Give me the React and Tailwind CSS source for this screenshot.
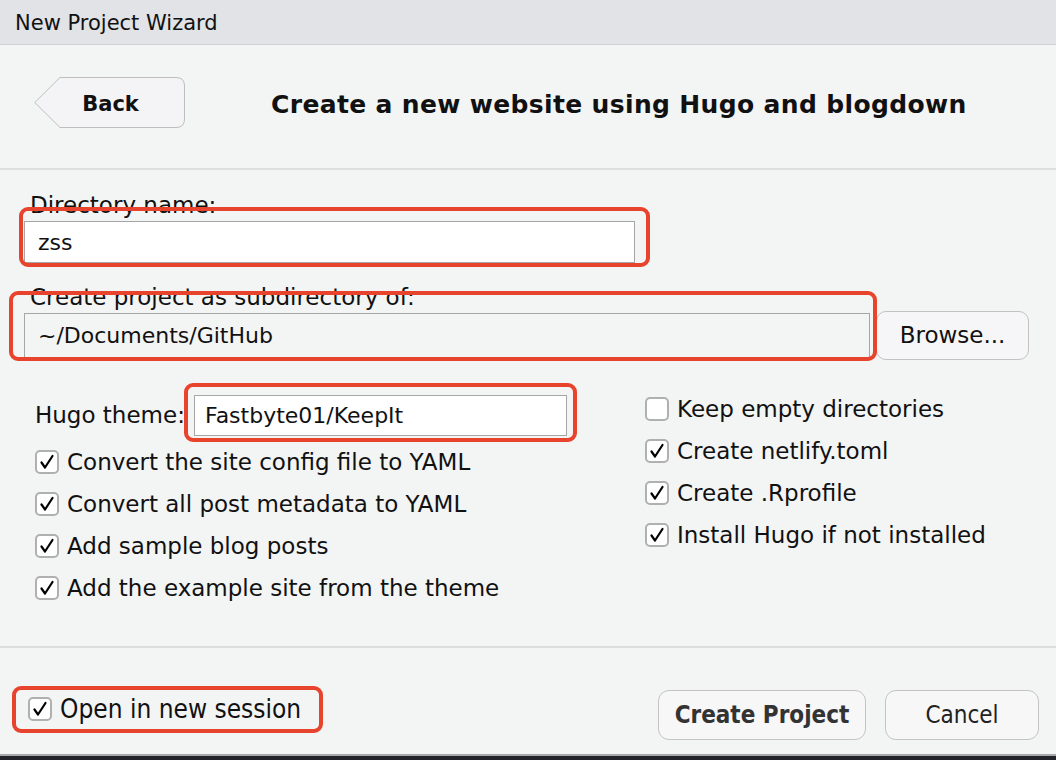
import React from "react";

const FONT = { fontFamily: '"DejaVu Sans", "Noto Sans", sans-serif' };
const COND = { fontFamily: '"DejaVu Sans Condensed", "DejaVu Sans", sans-serif', fontStretch: "condensed" };

function Check() {
  return (
    <svg width="16" height="16" viewBox="0 0 16 16" className="block">
      <path d="M2.5 8.5 L6 13.5 L13.5 2" fill="none" stroke="#000" strokeWidth="2.2" strokeLinecap="round" strokeLinejoin="round" />
    </svg>
  );
}

function Box({ checked }) {
  return (
    <div className="w-[24px] h-[24px] rounded-[5px] border-2 border-[#b0b0b0] bg-white flex items-center justify-center shrink-0">
      {checked ? <Check /> : null}
    </div>
  );
}

function CheckRow({ checked, label }) {
  return (
    <div className="h-[42px] flex items-center gap-[8px]">
      <Box checked={checked} />
      <span className="text-[23px] text-[#111] leading-none">{label}</span>
    </div>
  );
}

function RedBox({ className }) {
  return <div className={"absolute border-[4px] border-[#e8442d] rounded-[9px] pointer-events-none " + className} />;
}

export default function App() {
  return (
    <div className="w-[1056px] h-[760px] bg-[#f3f4f4] flex flex-col overflow-hidden text-[#111]" style={FONT}>
      {/* title bar */}
      <div className="h-[45px] shrink-0 bg-[#e2e3e7] border-b border-[#d2d3d7] flex items-center pl-[15px] pt-[3px] text-[21px]">
        New Project Wizard
      </div>

      {/* header */}
      <div className="h-[125px] shrink-0 border-b-2 border-[#dedede] flex items-start pt-[32px] pl-[34px]">
        <div className="relative w-[151px] h-[51px] shrink-0 flex items-center justify-center pl-[2px] pt-[4px]">
          <svg className="absolute inset-0" width="151" height="51" viewBox="0 0 151 51">
            <path d="M26 0.5 H142 Q150.5 0.5 150.5 9 V42 Q150.5 50.5 142 50.5 H26 L0.8 25.5 Z" fill="#f4f4f6" stroke="#bdbdbd" strokeWidth="1" />
          </svg>
          <span className="relative font-bold text-[21px]">Back</span>
        </div>
        <div className="ml-[86px] mt-[9px] font-bold text-[25px] tracking-[0.35px]">
          Create a new website using Hugo and blogdown
        </div>
      </div>

      {/* body */}
      <div className="h-[476px] shrink-0 flex flex-col pl-[24px]">
        <div className="mt-[21px] pl-[6px] h-[28px] text-[23px] leading-[28px]">Directory name:</div>
        <div className="relative mt-[2px] w-[611px] h-[42px] bg-white border border-[#a6a6a6] flex items-center pl-[13px] text-[22px]">
          zss
          <RedBox className="-left-[6px] -top-[15px] -right-[16px] -bottom-[5px]" />
        </div>

        <div className="mt-[20px] pl-[6px] h-[28px] text-[23px] leading-[28px]">Create project as subdirectory of:</div>
        <div className="mt-[0px] flex items-center">
          <div className="relative w-[846px] h-[45px] bg-[#f3f4f4] border border-[#a6a6a6] flex items-center pl-[13px] text-[22px]">
            ~/Documents/GitHub
            <RedBox className="-left-[16px] -top-[23px] -right-[8px] -bottom-[4px]" />
          </div>
          <div className="ml-[6px] w-[153px] h-[49px] rounded-[10px] border-[1.5px] border-[#c2c2c2] bg-[#f6f6f8] flex items-center justify-center text-[23px]">
            Browse...
          </div>
        </div>

        <div className="flex items-start">
          {/* left column */}
          <div className="w-[621px] shrink-0 pl-[11px] mt-[35px] flex flex-col">
            <div className="h-[41px] flex items-center mb-[5px]">
              <span className="w-[159px] shrink-0 text-[23px]">Hugo theme:</span>
              <div className="relative w-[373px] h-[41px] bg-white border border-[#a6a6a6] flex items-center pl-[10px] text-[22px]">
                Fastbyte01/KeepIt
                <RedBox className="-left-[11px] -top-[13px] -right-[11px] -bottom-[7px]" />
              </div>
            </div>
            <CheckRow checked label="Convert the site config file to YAML" />
            <CheckRow checked label="Convert all post metadata to YAML" />
            <CheckRow checked label="Add sample blog posts" />
            <CheckRow checked label="Add the example site from the theme" />
          </div>
          {/* right column */}
          <div className="mt-[28px] flex flex-col">
            <CheckRow checked={false} label="Keep empty directories" />
            <CheckRow checked label="Create netlify.toml" />
            <CheckRow checked label="Create .Rprofile" />
            <CheckRow checked label="Install Hugo if not installed" />
          </div>
        </div>
      </div>

      {/* footer */}
      <div className="h-[108px] shrink-0 border-t-2 border-[#dcdcdc] flex items-start justify-between pl-[28px] pr-[17px]">
        <div className="relative mt-[48px] flex items-center gap-[8px]">
          <Box checked />
          <span className="text-[26px] leading-none" style={COND}>Open in new session</span>
          <RedBox className="-left-[16px] -top-[10px] -right-[22px] -bottom-[11px]" />
        </div>
        <div className="mt-[42px] flex gap-[19px]">
          <div className="w-[208px] h-[50px] rounded-[11px] border-[1.5px] border-[#c4c4c4] bg-[#f7f7f8] flex items-center justify-center font-bold text-[24px] text-[#333]" style={COND}>
            Create Project
          </div>
          <div className="w-[154px] h-[50px] rounded-[11px] border-[1.5px] border-[#c4c4c4] bg-[#f7f7f8] flex items-center justify-center text-[24px] text-[#222]" style={COND}>
            Cancel
          </div>
        </div>
      </div>

      {/* bottom strip */}
      <div className="flex-1 flex flex-col">
        <div className="h-[2px] bg-[#a8a8a8]" />
        <div className="flex-1 bg-[#22232a]" />
      </div>
    </div>
  );
}
